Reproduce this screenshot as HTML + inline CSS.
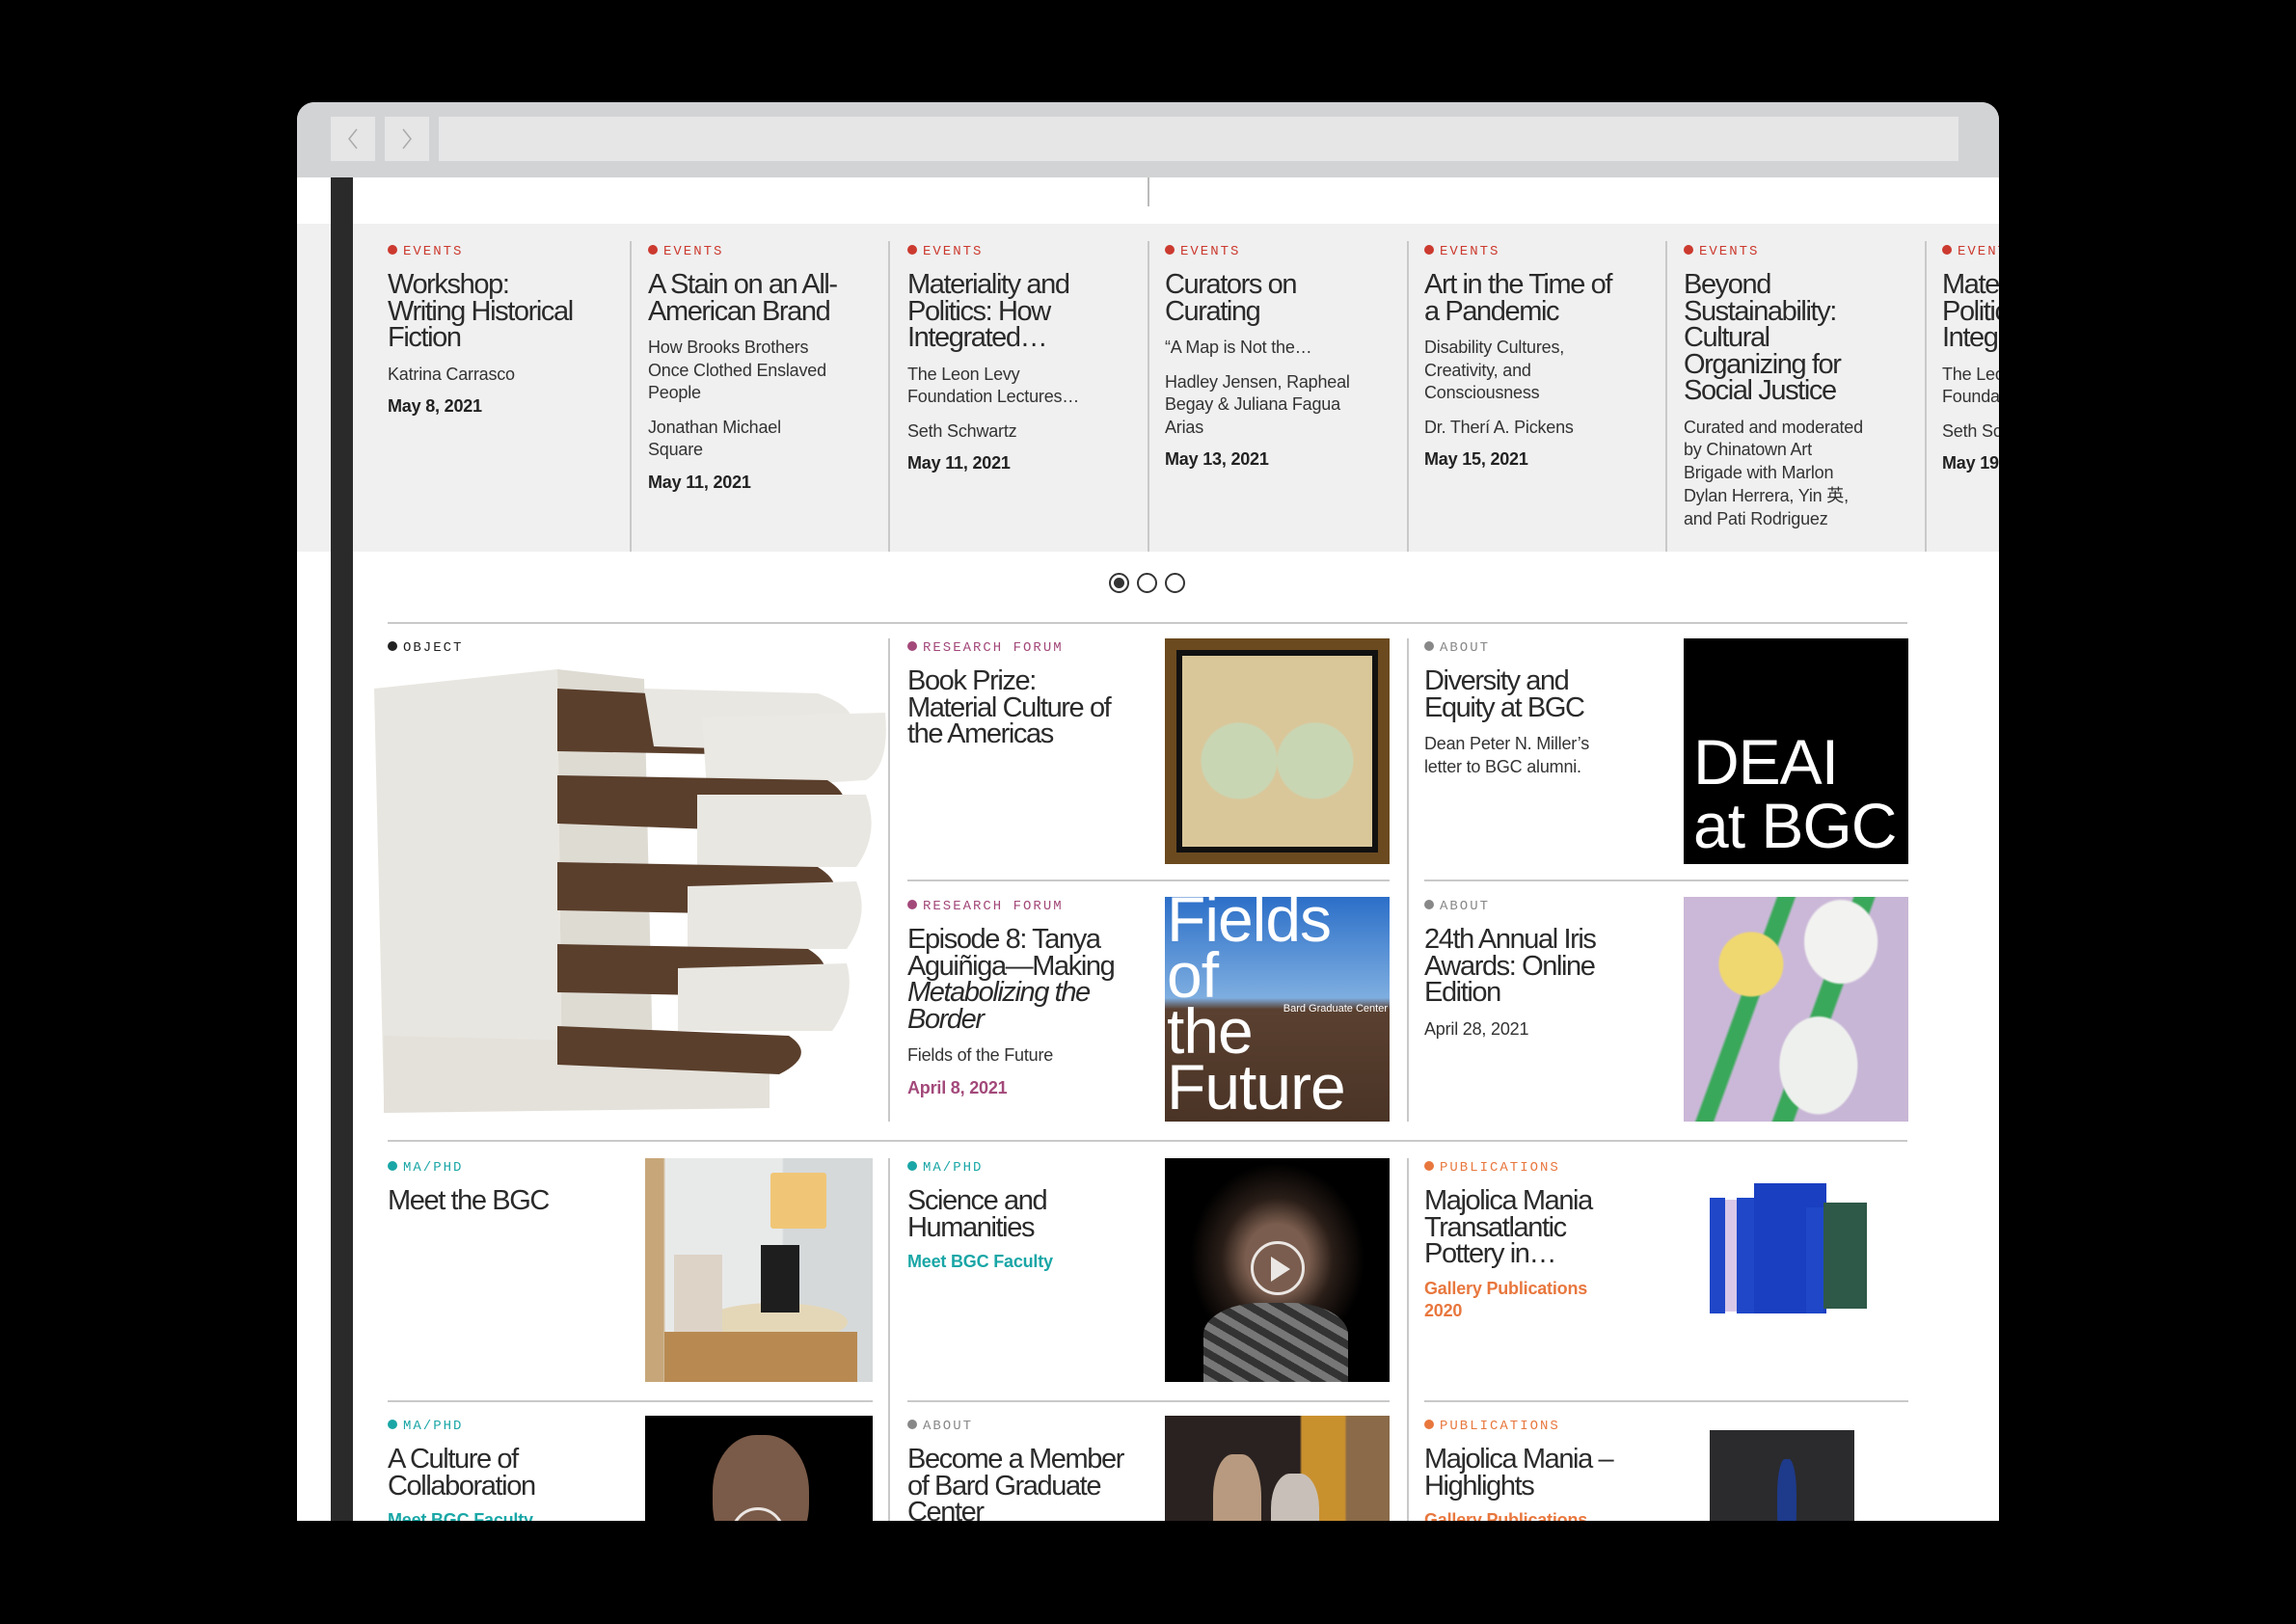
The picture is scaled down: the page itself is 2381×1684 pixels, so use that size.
<!DOCTYPE html>
<html><head><meta charset="utf-8">
<style>
*{margin:0;padding:0;box-sizing:border-box}
html,body{width:2381px;height:1684px;background:#000;overflow:hidden}
body{position:relative;font-family:"Liberation Sans",sans-serif;color:#222}
.frame{position:absolute;left:308px;top:106px;width:1765px;height:1471px;background:#fff;border-radius:18px 18px 0 0;overflow:hidden}
.tb{position:absolute;left:0;top:0;width:100%;height:78px;background:#d2d3d5}
.btn{position:absolute;top:15px;width:46px;height:46px;background:#e6e6e7}
.url{position:absolute;left:147px;top:15px;width:1576px;height:46px;background:#e6e6e7}
.abs{position:absolute}
.darkbar{position:absolute;left:35px;top:78px;width:23px;height:1400px;background:#2a2a2a}
.band{position:absolute;left:0;top:126px;width:100%;height:340px;background:#f0f0f0}
.vd{position:absolute;width:2px;background:#c9c9c9}
.ev{position:absolute;top:146px;width:245px}
.lab{font-family:"Liberation Mono",monospace;font-size:14px;letter-spacing:2px;line-height:18px;text-transform:uppercase;height:18px}
.lab:before{content:"";display:inline-block;width:10px;height:10px;border-radius:50%;background:currentColor;margin-right:6px;vertical-align:0px}
.red{color:#cc3a2f}.pink{color:#a3497a}.gray{color:#888}.teal{color:#1aa6a6}.orange{color:#e8773e}.blk{color:#222}
.t{font-family:"Liberation Sans Narrow","Liberation Sans",sans-serif;font-size:29px;line-height:27.5px;letter-spacing:-1.4px;color:#2a2a2a;margin-top:12px}
.s{font-family:"Liberation Sans Narrow","Liberation Sans",sans-serif;font-size:18px;letter-spacing:-0.2px;line-height:23.5px;color:#333;margin-top:12px}
.d{font-family:"Liberation Sans Narrow","Liberation Sans",sans-serif;font-size:18px;letter-spacing:-0.2px;font-weight:bold;line-height:23.5px;color:#222;margin-top:10px}
.hr{position:absolute;height:2px;background:#c9c9c9}
.card{position:absolute;width:240px}
.img{position:absolute;overflow:hidden}
.dot{position:absolute;top:488px;width:21px;height:21px;border:2px solid #333;border-radius:50%}
</style></head><body>
<div class="frame">
 <div class="tb"></div>
 <div class="btn" style="left:35px"><svg width="46" height="46"><path d="M27 13 L19 23 L27 33" fill="none" stroke="#aaa" stroke-width="1.5"/></svg></div>
 <div class="btn" style="left:91px"><svg width="46" height="46"><path d="M19 13 L27 23 L19 33" fill="none" stroke="#aaa" stroke-width="1.5"/></svg></div>
 <div class="url"></div>
 <div class="abs" style="left:882px;top:78px;width:2px;height:30px;background:#bbb"></div>
 <div class="band"></div>
 <div class="vd" style="left:345px;top:144px;height:322px"></div>
 <div class="vd" style="left:613px;top:144px;height:322px"></div>
 <div class="vd" style="left:882px;top:144px;height:322px"></div>
 <div class="vd" style="left:1151px;top:144px;height:322px"></div>
 <div class="vd" style="left:1419px;top:144px;height:322px"></div>
 <div class="vd" style="left:1688px;top:144px;height:322px"></div>

 <div class="ev" style="left:94px"><div class="lab red">Events</div><div class="t">Workshop:<br>Writing Historical<br>Fiction</div><div class="s">Katrina Carrasco</div><div class="d">May 8, 2021</div></div>
 <div class="ev" style="left:364px"><div class="lab red">Events</div><div class="t">A Stain on an All-<br>American Brand</div><div class="s">How Brooks Brothers<br>Once Clothed Enslaved<br>People</div><div class="s">Jonathan Michael<br>Square</div><div class="d">May 11, 2021</div></div>
 <div class="ev" style="left:633px"><div class="lab red">Events</div><div class="t">Materiality and<br>Politics: How<br>Integrated…</div><div class="s">The Leon Levy<br>Foundation Lectures…</div><div class="s">Seth Schwartz</div><div class="d">May 11, 2021</div></div>
 <div class="ev" style="left:900px"><div class="lab red">Events</div><div class="t">Curators on<br>Curating</div><div class="s">“A Map is Not the…</div><div class="s">Hadley Jensen, Rapheal<br>Begay &amp; Juliana Fagua<br>Arias</div><div class="d">May 13, 2021</div></div>
 <div class="ev" style="left:1169px"><div class="lab red">Events</div><div class="t">Art in the Time of<br>a Pandemic</div><div class="s">Disability Cultures,<br>Creativity, and<br>Consciousness</div><div class="s">Dr. Therí A. Pickens</div><div class="d">May 15, 2021</div></div>
 <div class="ev" style="left:1438px"><div class="lab red">Events</div><div class="t">Beyond<br>Sustainability:<br>Cultural<br>Organizing for<br>Social Justice</div><div class="s">Curated and moderated<br>by Chinatown Art<br>Brigade with Marlon<br>Dylan Herrera, Yin <span style="font-family:'Noto Sans CJK SC',sans-serif">英</span>,<br>and Pati Rodriguez</div></div>
 <div class="ev" style="left:1706px"><div class="lab red">Events</div><div class="t">Materiality and<br>Politics: How<br>Integrated…</div><div class="s">The Leon Levy<br>Foundation Lectures…</div><div class="s">Seth Schwartz</div><div class="d">May 19, 2021</div></div>

 <div class="dot" style="left:842px"><div style="position:absolute;left:3px;top:3px;width:11px;height:11px;border-radius:50%;background:#333"></div></div>
 <div class="dot" style="left:871px"></div>
 <div class="dot" style="left:900px"></div>

 <div class="hr" style="left:94px;top:539px;width:1576px"></div>

 <div class="vd" style="left:613px;top:556px;height:501px"></div>
 <div class="vd" style="left:1151px;top:556px;height:501px"></div>
 <div class="vd" style="left:613px;top:1095px;height:400px"></div>
 <div class="vd" style="left:1151px;top:1095px;height:400px"></div>

 <div class="card" style="left:94px;top:557px"><div class="lab blk">Object</div></div>
 <svg class="abs" style="left:70px;top:578px" width="545" height="485" viewBox="0 0 545 485">
  <path d="M10 30 L200 10 L205 460 L20 455 Z" fill="#e8e6e0"/>
  <path d="M200 10 L290 20 L300 460 L205 460 Z" fill="#dedbd3"/>
  <path d="M20 390 L420 400 L420 465 L20 470 Z" fill="#e4e1da"/>
  <path d="M200 30 L490 45 Q520 70 470 100 L200 95 Z" fill="#5a3f2c"/>
  <path d="M290 30 L470 35 Q540 60 470 95 L300 90 Z" fill="#e9e7e2"/>
  <path d="M350 60 L540 55 Q545 110 520 125 L355 135 Z" fill="#ebe9e4"/>
  <path d="M200 120 L480 125 Q520 150 470 180 L200 170 Z" fill="#5a3f2c"/>
  <path d="M345 140 L520 140 Q535 180 510 215 L345 215 Z" fill="#e9e7e2"/>
  <path d="M200 210 L470 215 Q510 240 460 265 L200 260 Z" fill="#5a3f2c"/>
  <path d="M335 235 L510 230 Q525 265 500 300 L335 300 Z" fill="#e9e7e2"/>
  <path d="M200 295 L460 300 Q500 325 450 350 L200 345 Z" fill="#5a3f2c"/>
  <path d="M325 320 L500 315 Q510 350 485 385 L325 385 Z" fill="#e9e7e2"/>
  <path d="M200 380 L440 390 Q470 410 430 430 L200 420 Z" fill="#5a3f2c"/>
 </svg>

 <div class="card" style="left:633px;top:557px"><div class="lab pink">Research Forum</div><div class="t">Book Prize:<br>Material Culture of<br>the Americas</div></div>
 <div class="img" style="left:900px;top:556px;width:233px;height:234px;background:#6b4a1f;padding:12px"><div style="width:100%;height:100%;background:#111;padding:6px"><div style="width:100%;height:100%;background:radial-gradient(circle at 30% 55%,#c9d6b4 0 22%,transparent 23%),radial-gradient(circle at 70% 55%,#c9d6b4 0 22%,transparent 23%),#d9c79a"></div></div></div>
 <div class="hr" style="left:633px;top:806px;width:500px"></div>
 <div class="card" style="left:633px;top:825px"><div class="lab pink">Research Forum</div><div class="t">Episode 8: Tanya<br>Aguiñiga—Making<br><i>Metabolizing the</i><br><i>Border</i></div><div class="s">Fields of the Future</div><div class="d" style="color:#a3497a">April 8, 2021</div></div>
 <div class="img" style="left:900px;top:824px;width:233px;height:233px;background:linear-gradient(#2c6fc8 0,#7eaee0 45%,#5a4030 50%,#4a3426 100%)"><div style="color:#fff;font-size:66px;line-height:58px;letter-spacing:-1px;margin-left:2px;margin-top:-6px">Fields<br>of<br>the<br>Future</div><div style="position:absolute;right:2px;top:110px;color:#fff;font-size:11px">Bard Graduate Center</div></div>

 <div class="card" style="left:1169px;top:557px"><div class="lab gray">About</div><div class="t">Diversity and<br>Equity at BGC</div><div class="s">Dean Peter N. Miller’s<br>letter to BGC alumni.</div></div>
 <div class="img" style="left:1438px;top:556px;width:233px;height:234px;background:#000"><div style="position:absolute;left:10px;top:95px;color:#fff;font-size:66px;line-height:66px;letter-spacing:-1px">DEAI<br>at BGC</div></div>
 <div class="hr" style="left:1169px;top:806px;width:502px"></div>
 <div class="card" style="left:1169px;top:825px"><div class="lab gray">About</div><div class="t">24th Annual Iris<br>Awards: Online<br>Edition</div><div class="s">April 28, 2021</div></div>
 <div class="img" style="left:1438px;top:824px;width:233px;height:233px;background:radial-gradient(ellipse at 30% 30%,#f0d870 0 14%,transparent 15%),radial-gradient(ellipse at 70% 20%,#f2f2f0 0 16%,transparent 17%),radial-gradient(ellipse at 60% 75%,#eef0ee 0 20%,transparent 21%),linear-gradient(110deg,#cbb8d8 0 30%,#3aa85a 31% 36%,#cbb8d8 37% 55%,#3aa85a 56% 62%,#c8b6d6 63%)"></div>

 <div class="hr" style="left:94px;top:1076px;width:1576px"></div>

 <div class="card" style="left:94px;top:1096px"><div class="lab teal">MA/PhD</div><div class="t">Meet the BGC</div></div>
 <div class="img" style="left:361px;top:1095px;width:236px;height:232px;background:linear-gradient(90deg,#c7a77a 0 8%,#e8eaea 9% 60%,#d5d9da 61%)"><div style="position:absolute;left:130px;top:15px;width:58px;height:58px;background:#f0c676;border-radius:3px"></div><div style="position:absolute;left:60px;top:150px;width:150px;height:40px;background:#e4d7b8;border-radius:50%"></div><div style="position:absolute;left:30px;top:100px;width:50px;height:80px;background:#ddd3c7"></div><div style="position:absolute;left:120px;top:90px;width:40px;height:70px;background:#1e1e1e"></div><div style="position:absolute;left:20px;top:180px;width:200px;height:52px;background:#b88a52"></div></div>
 <div class="hr" style="left:94px;top:1346px;width:503px"></div>

 <div class="card" style="left:633px;top:1096px"><div class="lab teal">MA/PhD</div><div class="t">Science and<br>Humanities</div><div class="d" style="color:#1aa6a6">Meet BGC Faculty</div></div>
 <div class="img" style="left:900px;top:1095px;width:233px;height:232px;background:radial-gradient(ellipse at 50% 45%,#7a5d4e 0 20%,#2a1e18 35%,#000 55%)"><div style="position:absolute;left:40px;top:150px;width:150px;height:82px;background:repeating-linear-gradient(30deg,#777 0 8px,#333 8px 16px);border-radius:40% 40% 0 0"></div><div style="position:absolute;left:89px;top:86px;width:56px;height:56px;border:3px solid rgba(255,255,255,.85);border-radius:50%"></div><svg class="abs" style="left:105px;top:100px" width="30" height="30"><path d="M5 2 L25 15 L5 28 Z" fill="rgba(255,255,255,.85)"/></svg></div>
 <div class="hr" style="left:633px;top:1346px;width:500px"></div>

 <div class="card" style="left:1169px;top:1096px"><div class="lab orange">Publications</div><div class="t">Majolica Mania<br>Transatlantic<br>Pottery in…</div><div class="d" style="color:#e8773e">Gallery Publications<br>2020</div></div>
 <div class="img" style="left:1465px;top:1116px;width:165px;height:145px"><div style="position:absolute;left:0;top:20px;width:16px;height:120px;background:#1f47c8"></div><div style="position:absolute;left:16px;top:22px;width:12px;height:116px;background:#d9c8e8"></div><div style="position:absolute;left:28px;top:20px;width:18px;height:120px;background:#1f47c8"></div><div style="position:absolute;left:46px;top:5px;width:75px;height:135px;background:#1a3fc0"></div><div style="position:absolute;left:100px;top:30px;width:18px;height:110px;background:#1f47c8"></div><div style="position:absolute;left:118px;top:25px;width:45px;height:110px;background:#2e5848"></div></div>
 <div class="hr" style="left:1169px;top:1346px;width:502px"></div>

 <div class="card" style="left:94px;top:1364px"><div class="lab teal">MA/PhD</div><div class="t">A Culture of<br>Collaboration</div><div class="d" style="color:#1aa6a6">Meet BGC Faculty</div></div>
 <div class="img" style="left:361px;top:1362px;width:236px;height:150px;background:#000"><div style="position:absolute;left:70px;top:20px;width:100px;height:130px;background:#7a5a48;border-radius:45%"></div><div style="position:absolute;left:89px;top:95px;width:56px;height:56px;border:3px solid rgba(255,255,255,.85);border-radius:50%"></div></div>
 <div class="card" style="left:633px;top:1364px"><div class="lab gray">About</div><div class="t">Become a Member<br>of Bard Graduate<br>Center</div></div>
 <div class="img" style="left:900px;top:1362px;width:233px;height:150px;background:linear-gradient(90deg,#2a2220 0 60%,#c9902e 61% 80%,#8a6a48 81%)"><div style="position:absolute;left:50px;top:40px;width:50px;height:110px;background:#b89a80;border-radius:40%"></div><div style="position:absolute;left:110px;top:60px;width:50px;height:90px;background:#c8c0b8;border-radius:40%"></div></div>
 <div class="card" style="left:1169px;top:1364px"><div class="lab orange">Publications</div><div class="t">Majolica Mania –<br>Highlights</div><div class="d" style="color:#e8773e">Gallery Publications</div></div>
 <div class="img" style="left:1465px;top:1377px;width:150px;height:120px;background:#2b2b2d"><div style="position:absolute;left:70px;top:30px;width:20px;height:90px;background:#1e3a8a;border-radius:40%"></div><div style="position:absolute;left:50px;top:100px;width:60px;height:30px;background:#3a8a3a;border-radius:50%"></div></div>

 <div class="darkbar"></div>
</div>
</body></html>
